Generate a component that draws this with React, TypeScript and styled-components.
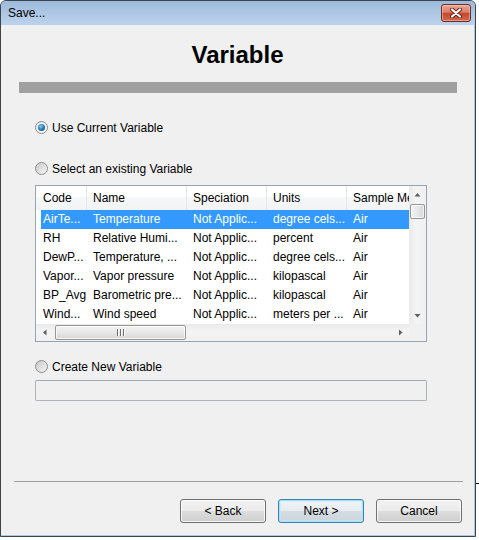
import React from "react";
import styled, { createGlobalStyle, css } from "styled-components";

const Global = createGlobalStyle`
  html, body { margin: 0; padding: 0; }
  body {
    background: linear-gradient(#000, #000) 0 483px / 100% 1px no-repeat, #fff;
    font-family: "Liberation Sans", Arial, sans-serif;
    font-size: 12px;
    color: #000;
  }
`;

const Window = styled.div`
  width: 476px;
  height: 537px;
  box-sizing: border-box;
  border: 1px solid #3b434c;
  border-radius: 6px 6px 0 0;
  background: #a9c6e6;
  display: flex;
  flex-direction: column;
  overflow: hidden;
`;

const TitleBar = styled.div`
  height: 24px;
  flex: none;
  display: flex;
  align-items: flex-start;
  justify-content: space-between;
  padding: 0 4px 0 7px;
  background: linear-gradient(#9dbadb, #afc8e5 55%, #bcd3eb);
`;

const Title = styled.span`
  font-size: 12px;
  line-height: 24px;
  color: #000;
`;

const CloseButton = styled.div`
  width: 30px;
  height: 18px;
  margin-top: 3px;
  box-sizing: border-box;
  border: 1px solid #6b2b24;
  border-radius: 3px;
  background: linear-gradient(#eaa895, #db7d66 45%, #c5482d 52%, #cf6a4d);
  box-shadow: inset 0 0 0 1px rgba(255, 230, 220, 0.45);
  display: flex;
  align-items: center;
  justify-content: center;
`;

const Body = styled.div`
  flex: 1;
  margin: 0 1px 1px 0;
  background: #f0f0f0;
  display: flex;
  flex-direction: column;
`;

const Heading = styled.h1`
  margin: 0;
  height: 57px;
  display: flex;
  align-items: center;
  justify-content: center;
  padding-top: 3px;
  box-sizing: border-box;
  font-family: "Liberation Sans", Arial, sans-serif;
  font-weight: bold;
  font-size: 24px;
  color: #000;
`;

const ProgressBar = styled.div`
  margin-left: 18px;
  width: 438px;
  height: 11px;
  background: #a0a0a0;
`;

const Options = styled.div`
  padding-left: 34px;
  display: flex;
  flex-direction: column;
`;

const RadioRow = styled.label<{ $top: number }>`
  margin-top: ${(p) => p.$top}px;
  height: 15px;
  display: flex;
  align-items: center;
  gap: 4px;
  font-size: 12px;
  color: #000;
`;

const RadioCircle = styled.span<{ $checked?: boolean }>`
  position: relative;
  width: 13px;
  height: 13px;
  flex: none;
  box-sizing: border-box;
  border-radius: 50%;
  border: 1px solid #8b8d8f;
  background: linear-gradient(135deg, #c9c9c9, #f6f6f6);
  ${(p) =>
    p.$checked &&
    css`
      background: linear-gradient(135deg, #e6e6e6, #ffffff);
      &::after {
        content: "";
        position: absolute;
        left: 2px;
        top: 2px;
        width: 7px;
        height: 7px;
        border-radius: 50%;
        background: radial-gradient(circle at 40% 35%, #7fd0f8, #1f71b0 55%, #0d3f6c);
      }
    `}
`;

const ListBox = styled.div`
  margin-top: 9px;
  width: 392px;
  height: 157px;
  box-sizing: border-box;
  border: 1px solid #97a4b4;
  background: #fff;
  display: grid;
  grid-template-columns: 1fr 17px;
  grid-template-rows: 1fr 17px;
`;

const ListArea = styled.div`
  overflow: hidden;
  display: flex;
  flex-direction: column;
`;

const HeaderRow = styled.div`
  height: 24px;
  flex: none;
  display: grid;
  grid-template-columns: 51px 100px 80px 80px 100px;
  background: linear-gradient(#ffffff 0%, #ffffff 45%, #f7f8fa 46%, #f2f3f5 100%);
`;

const HeaderCell = styled.div<{ $first?: boolean }>`
  padding-left: ${(p) => (p.$first ? 7 : 6)}px;
  line-height: 24px;
  white-space: nowrap;
  overflow: hidden;
  border-right: 1px solid #e3e6ea;
  color: #000;
`;

const Row = styled.div<{ $selected?: boolean }>`
  height: 19px;
  flex: none;
  margin-left: 5px;
  display: grid;
  grid-template-columns: 46px 100px 80px 80px 100px;
  background: ${(p) => (p.$selected ? "#3399ff" : "transparent")};
  color: ${(p) => (p.$selected ? "#fff" : "#000")};
`;

const Cell = styled.div<{ $first?: boolean }>`
  padding-left: ${(p) => (p.$first ? 2 : 6)}px;
  line-height: 19px;
  white-space: nowrap;
  overflow: hidden;
`;

const VScroll = styled.div`
  background: linear-gradient(90deg, #e9e9e9, #f4f4f4 40%, #f0f0f0);
  display: flex;
  flex-direction: column;
  align-items: center;
`;

const HScroll = styled.div`
  background: linear-gradient(#e9e9e9, #f4f4f4 40%, #f0f0f0);
  display: flex;
  align-items: center;
`;

const Corner = styled.div`
  background: #f0f0f0;
`;

const ArrowButton = styled.div`
  width: 17px;
  height: 17px;
  flex: none;
  display: flex;
  align-items: center;
  justify-content: center;
`;

const Spacer = styled.div`
  flex: 1;
`;

const VThumb = styled.div`
  width: 15px;
  height: 15px;
  margin-top: 1px;
  box-sizing: border-box;
  border: 1px solid #979797;
  border-radius: 2px;
  background: linear-gradient(90deg, #f3f3f3, #e8e8e8 50%, #d6d6d6);
  box-shadow: inset 0 0 0 1px rgba(255, 255, 255, 0.7);
`;

const HThumb = styled.div`
  width: 131px;
  height: 15px;
  margin-left: 2px;
  box-sizing: border-box;
  border: 1px solid #979797;
  border-radius: 2px;
  background: linear-gradient(#f3f3f3, #e8e8e8 50%, #d6d6d6);
  box-shadow: inset 0 0 0 1px rgba(255, 255, 255, 0.7);
  display: flex;
  align-items: center;
  justify-content: center;
`;

const TextField = styled.div`
  margin-top: 6px;
  width: 392px;
  height: 21px;
  box-sizing: border-box;
  border: 1px solid #adb2bb;
  border-top-color: #a3a8b0;
  border-radius: 2px;
  background: #f0f0f0;
`;

const Footer = styled.div`
  margin-top: auto;
  padding-bottom: 12px;
  display: flex;
  flex-direction: column;
`;

const Separator = styled.div`
  margin: 0 11px 0 13px;
  height: 1px;
  background: #a0a0a0;
`;

const ButtonRow = styled.div`
  margin-top: 17px;
  padding-right: 12px;
  display: flex;
  justify-content: flex-end;
  gap: 12px;
`;

const Button = styled.button<{ $default?: boolean }>`
  width: 86px;
  height: 24px;
  box-sizing: border-box;
  padding: 0;
  border: 1px solid ${(p) => (p.$default ? "#3c7fb1" : "#707070")};
  border-radius: 3px;
  font-family: "Liberation Sans", Arial, sans-serif;
  font-size: 12px;
  color: #000;
  background: ${(p) =>
    p.$default
      ? "linear-gradient(#f0f4f7, #e6ecf0 50%, #d5dde3 51%, #ccd5dc)"
      : "linear-gradient(#f2f2f2, #ebebeb 50%, #dddddd 51%, #cfcfcf)"};
  box-shadow: ${(p) =>
    p.$default
      ? "inset 0 0 0 1px #a9e2fb, inset 0 0 0 2px rgba(190, 235, 252, 0.5)"
      : "inset 0 0 0 1px rgba(255, 255, 255, 0.8)"};
`;

type Dir = "up" | "down" | "left" | "right";

const Arrow = ({ dir }: { dir: Dir }) => {
  const pts: Record<Dir, string> = {
    up: "0.5,4.5 3.5,1 6.5,4.5",
    down: "0.5,1 3.5,4.5 6.5,1",
    left: "4.5,0.5 1,3.5 4.5,6.5",
    right: "1,0.5 4.5,3.5 1,6.5",
  };
  const vertical = dir === "up" || dir === "down";
  return (
    <svg width={vertical ? 7 : 6} height={vertical ? 6 : 7} viewBox={vertical ? "0 0 7 6" : "0 0 6 7"}>
      <polygon points={pts[dir]} fill="#5e5e5e" />
    </svg>
  );
};

const Grip = () => (
  <svg width="8" height="7" viewBox="0 0 8 7">
    {[0, 3, 6].map((x) => (
      <g key={x}>
        <rect x={x} y="0" width="1" height="7" fill="#6e6e6e" />
        <rect x={x + 1} y="0" width="1" height="7" fill="#ffffff" />
      </g>
    ))}
  </svg>
);

const CloseGlyph = () => (
  <svg width="12" height="10" viewBox="0 0 12 10">
    <path d="M2 1.5 L10 8.5 M10 1.5 L2 8.5" stroke="#5a241c" strokeWidth="4" strokeLinecap="round" />
    <path d="M2 1.5 L10 8.5 M10 1.5 L2 8.5" stroke="#ffffff" strokeWidth="2.2" strokeLinecap="round" />
  </svg>
);

const columns = ["Code", "Name", "Speciation", "Units", "Sample Medium"];

const rows: string[][] = [
  ["AirTe...", "Temperature", "Not Applic...", "degree cels...", "Air"],
  ["RH", "Relative Humi...", "Not Applic...", "percent", "Air"],
  ["DewP...", "Temperature, ...", "Not Applic...", "degree cels...", "Air"],
  ["Vapor...", "Vapor pressure", "Not Applic...", "kilopascal", "Air"],
  ["BP_Avg", "Barometric pre...", "Not Applic...", "kilopascal", "Air"],
  ["Wind...", "Wind speed", "Not Applic...", "meters per ...", "Air"],
];

export default function App() {
  return (
    <>
      <Global />
      <Window>
        <TitleBar>
          <Title>Save...</Title>
          <CloseButton>
            <CloseGlyph />
          </CloseButton>
        </TitleBar>
        <Body>
          <Heading>Variable</Heading>
          <ProgressBar />
          <Options>
            <RadioRow $top={27}>
              <RadioCircle $checked />
              Use Current Variable
            </RadioRow>
            <RadioRow $top={26}>
              <RadioCircle />
              Select an existing Variable
            </RadioRow>
            <ListBox>
              <ListArea>
                <HeaderRow>
                  {columns.map((c, i) => (
                    <HeaderCell key={c} $first={i === 0}>
                      {c}
                    </HeaderCell>
                  ))}
                </HeaderRow>
                {rows.map((r, ri) => (
                  <Row key={ri} $selected={ri === 0}>
                    {r.map((v, ci) => (
                      <Cell key={ci} $first={ci === 0}>
                        {v}
                      </Cell>
                    ))}
                  </Row>
                ))}
              </ListArea>
              <VScroll>
                <ArrowButton>
                  <Arrow dir="up" />
                </ArrowButton>
                <VThumb />
                <Spacer />
                <ArrowButton>
                  <Arrow dir="down" />
                </ArrowButton>
              </VScroll>
              <HScroll>
                <ArrowButton>
                  <Arrow dir="left" />
                </ArrowButton>
                <HThumb>
                  <Grip />
                </HThumb>
                <Spacer />
                <ArrowButton>
                  <Arrow dir="right" />
                </ArrowButton>
              </HScroll>
              <Corner />
            </ListBox>
            <RadioRow $top={17}>
              <RadioCircle />
              Create New Variable
            </RadioRow>
            <TextField />
          </Options>
          <Footer>
            <Separator />
            <ButtonRow>
              <Button>&lt; Back</Button>
              <Button $default>Next &gt;</Button>
              <Button>Cancel</Button>
            </ButtonRow>
          </Footer>
        </Body>
      </Window>
    </>
  );
}
